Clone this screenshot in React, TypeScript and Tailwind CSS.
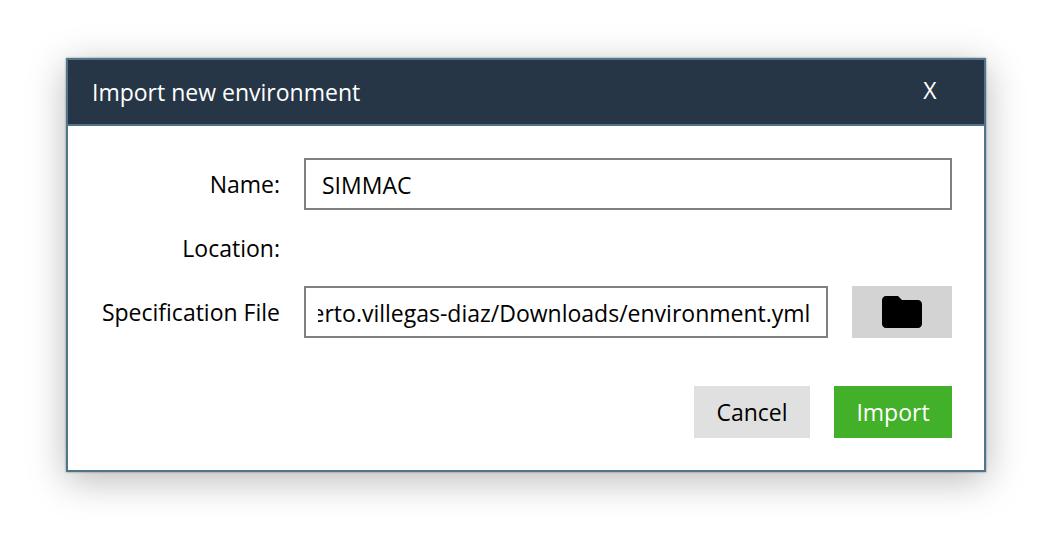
import { useLayoutEffect, useRef, useState } from "react";
import { MdFolder } from "react-icons/md";

const label = "text-right whitespace-nowrap leading-8";
const field =
  "h-13 w-full min-w-0 border-2 border-[#808080] bg-white pt-0.5 text-black outline-none";
const button = "flex h-13 items-center justify-center leading-8";

export default function App() {
  const [name, setName] = useState("SIMMAC");
  const [path, setPath] = useState(
    "/Users/alberto.villegas-diaz/Downloads/environment.yml",
  );
  const pathInput = useRef<HTMLInputElement>(null);

  // Keep the end of the path, the file name, in view.
  useLayoutEffect(() => {
    if (pathInput.current) {
      pathInput.current.scrollLeft = pathInput.current.scrollWidth;
    }
  }, [path]);

  return (
    <main className="min-h-screen bg-white px-[66px] py-[58px] font-['Open_Sans',sans-serif] text-[23px] text-black">
      <section
        role="dialog"
        aria-labelledby="dialog-title"
        className="border-2 border-[#50758a] bg-white shadow-[0_0_2px_rgba(0,0,0,0.4),0_8px_36px_rgba(0,0,0,0.28)]"
      >
        <header className="flex h-[66px] items-center justify-between border-b-2 border-[#50758a] bg-[#263646] pr-9 pl-6 text-white">
          <h1 id="dialog-title" className="leading-8">
            Import new environment
          </h1>
          <button type="button" aria-label="Close" className="w-9 pb-1 leading-8">
            X
          </button>
        </header>
        <form className="p-8" onSubmit={(event) => event.preventDefault()}>
          <div className="grid grid-cols-[180px_minmax(0,1fr)] items-center gap-x-6 gap-y-3">
            <label htmlFor="name" className={label}>
              Name:
            </label>
            <input
              id="name"
              type="text"
              className={`${field} px-4`}
              value={name}
              onChange={(event) => setName(event.target.value)}
            />
            <span className={label}>Location:</span>
            <div className="h-13" />
            <label htmlFor="file" className={label}>
              Specification File
            </label>
            <div className="flex gap-6">
              <input
                id="file"
                ref={pathInput}
                type="text"
                className={`${field} pr-4 pl-3`}
                value={path}
                onChange={(event) => setPath(event.target.value)}
              />
              <button
                type="button"
                aria-label="Choose file"
                className={`${button} w-[100px] shrink-0 bg-[#d3d3d3]`}
              >
                <MdFolder className="size-12" />
              </button>
            </div>
          </div>
          <div className="mt-12 flex justify-end gap-6">
            <button type="button" className={`${button} w-[116px] bg-[#e0e0e0]`}>
              Cancel
            </button>
            <button
              type="submit"
              className={`${button} w-[118px] bg-[#43b02a] text-white`}
            >
              Import
            </button>
          </div>
        </form>
      </section>
    </main>
  );
}
